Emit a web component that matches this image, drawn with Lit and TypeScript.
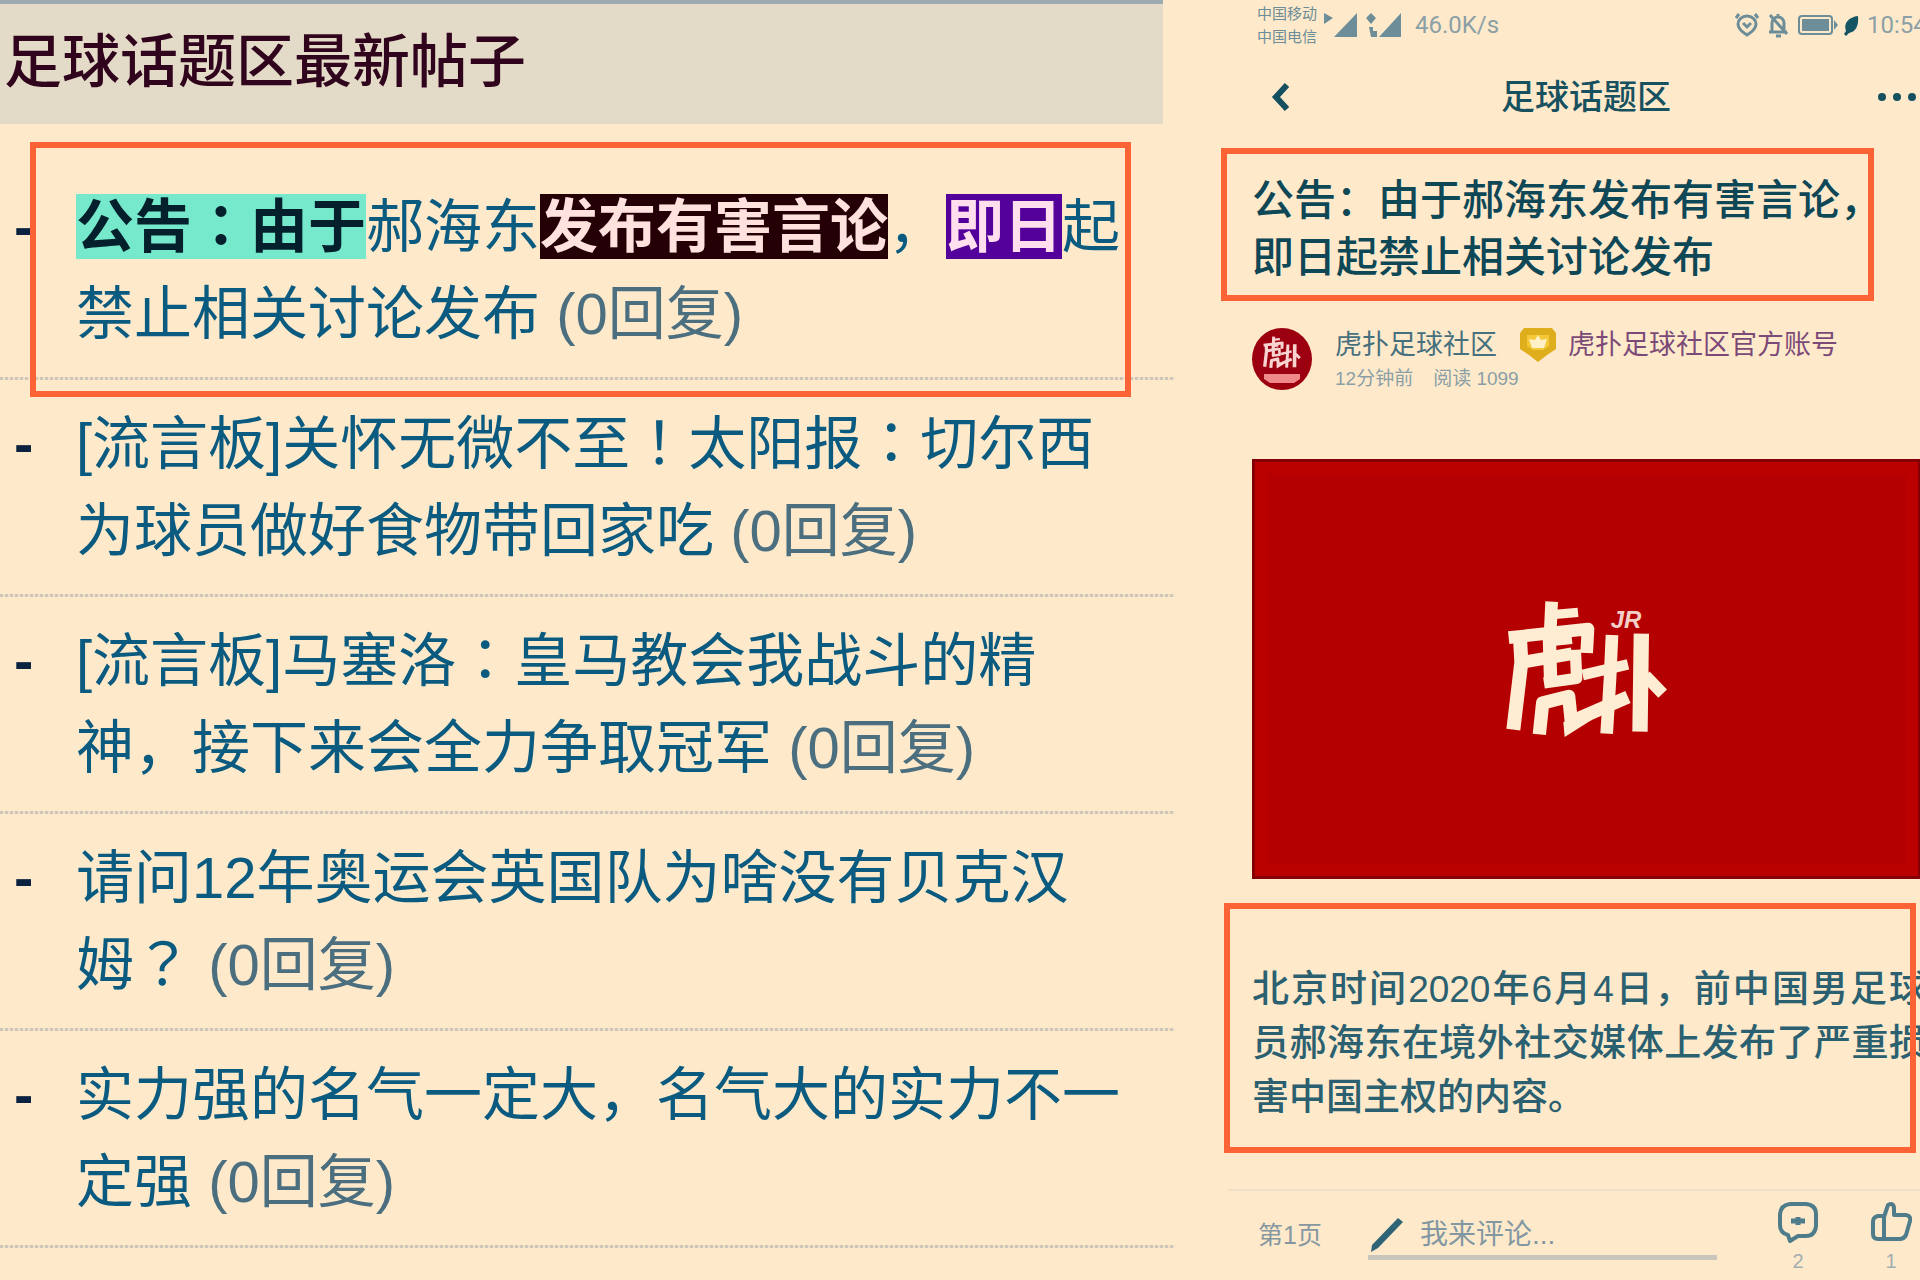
import { LitElement, html, css, svg, nothing } from "lit";
import { customElement, property } from "lit/decorators.js";

type Mark = "mint" | "dark" | "violet";
interface Run { text: string; mark?: Mark }
interface Post { runs: Run[]; replies: number; framed?: boolean }

const POSTS: Post[] = [
  {
    framed: true,
    replies: 0,
    runs: [
      { text: "公告：由于", mark: "mint" },
      { text: "郝海东" },
      { text: "发布有害言论", mark: "dark" },
      { text: "，" },
      { text: "即日", mark: "violet" },
      { text: "起禁止相关讨论发布" },
    ],
  },
  { replies: 0, runs: [{ text: "[流言板]关怀无微不至！太阳报：切尔西为球员做好食物带回家吃" }] },
  { replies: 0, runs: [{ text: "[流言板]马塞洛：皇马教会我战斗的精神，接下来会全力争取冠军" }] },
  { replies: 0, runs: [{ text: "请问12年奥运会英国队为啥没有贝克汉姆？" }] },
  { replies: 0, runs: [{ text: "实力强的名气一定大，名气大的实力不一定强" }] },
];

/* Full-width colons and marks sit in the middle of their cell in the list. */
const centred = (text: string) =>
  text.split(/([：！？])/).map((part) =>
    /^[：！？]$/.test(part) ? html`<span class="mid">${part}</span>` : part
  );

const brandMark = svg`
  <g fill="none" stroke="currentColor" stroke-linejoin="round">
    <path stroke-width="38" d="M279 68 L274 172"/>
    <path stroke-width="28" d="M290 106 L358 100"/>
    <path stroke-width="38" d="M150 176 L388 150 L384 222"/>
    <path stroke-width="42" d="M184 176 L188 250 L164 452"/>
    <path stroke-width="38" d="M200 248 L340 224"/>
    <path stroke-width="40" d="M272 170 L276 314"/>
    <path stroke-width="34" d="M256 312 L354 298 L350 212"/>
    <path stroke-width="26" d="M260 190 L340 182"/>
    <path stroke-width="40" d="M242 466 L252 372 L330 352 L338 428 L508 354"/>
    <path stroke-width="38" d="M460 168 L454 300 L444 464"/>
    <path stroke-width="32" d="M372 288 L508 256"/>
    <path stroke-width="46" d="M548 164 L544 458"/>
    <path stroke-width="36" d="M560 290 L612 344"/>
  </g>
  <path fill="currentColor" d="M314 430 L318 474 L400 422 L380 392 Z"/>`;

@customElement("post-item")
class PostItem extends LitElement {
  @property({ attribute: false }) post!: Post;

  static styles = css`
    :host {
      position: relative;
      display: flex;
      padding: 20px 47px 20px 14px;
      font-size: 58px;
      line-height: 87px;
      color: #0b5b80;
    }
    :host::after {
      content: "";
      position: absolute;
      inset: auto 0 0 0;
      height: 3px;
      background: repeating-linear-gradient(90deg, #cdc6b9 0 3px, #f3e2c8 3px 5px);
    }
    .dash { flex: 0 0 62px; color: #0a2140; font-weight: 700; }
    .text { flex: 1; min-width: 0; margin-bottom: 3px; }
    .link { color: inherit; text-decoration: none; }
    .mid { font-family: "Noto Sans CJK TC", sans-serif; line-height: 1; }
    .mark { font-weight: 700; }
    .mint { background: #76e9cd; color: #04202c; }
    .dark { background: #240006; color: #ffe2de; }
    .violet { background: #54009a; color: #ffdfee; }
    .replies { color: #4c6f80; white-space: nowrap; }
    .frame {
      position: absolute;
      inset: -21px 44px -17px 30px;
      border: 6px solid #fb6337;
      z-index: 1;
      pointer-events: none;
    }
  `;

  render() {
    const { runs, replies, framed } = this.post;
    return html`
      <span class="dash">-</span>
      <div class="text"><a class="link" href="#">${runs.map((r) =>
        r.mark ? html`<span class="mark ${r.mark}">${centred(r.text)}</span>` : centred(r.text)
      )}</a> <span class="replies">(${replies}回复)</span></div>
      ${framed ? html`<div class="frame"></div>` : nothing}
    `;
  }
}

@customElement("phone-view")
class PhoneView extends LitElement {
  static styles = css`
    :host {
      display: block;
      padding-left: 77px;
      color: #17505f;
    }
    svg { display: block; flex: none; }
    button { border: 0; padding: 0; background: none; color: inherit; font: inherit; }

    .status {
      display: flex;
      align-items: center;
      height: 50px;
      padding-left: 5px;
      color: #6d8d98;
      font-size: 24px;
      white-space: nowrap;
    }
    .carriers { font-size: 15px; line-height: 23px; }
    .signal { margin-left: 6px; }
    .speed { margin-left: 12px; font-family: Roboto, sans-serif; color: #8ba0a6; }
    .tray { display: flex; align-items: center; gap: 8px; margin-left: auto; }
    .power { display: flex; align-items: center; gap: 4px; }
    .clock { flex: none; width: 53px; font-family: Roboto, sans-serif; color: #8ba0a6; }

    .nav {
      display: grid;
      grid-template-columns: 44px 1fr 44px;
      align-items: center;
      height: 94px;
    }
    .nav .back { padding-left: 18px; }
    .nav h2 { margin: 0; text-align: center; font-size: 34px; line-height: 48px; font-weight: 500; }

    .headline { position: relative; margin-top: 28px; }
    .headline h1 {
      margin: 0;
      font-size: 42px;
      line-height: 57px;
      font-weight: 500;
      color: #0e4756;
      white-space: nowrap;
    }
    .frame {
      position: absolute;
      border: 6px solid #fb6337;
      pointer-events: none;
    }
    .headline .frame { inset: -24px 46px -15px -31px; }

    .author {
      display: grid;
      grid-template-columns: 62px 1fr;
      column-gap: 21px;
      margin-top: 41px;
    }
    .names { display: flex; align-items: center; font-size: 27px; line-height: 34px; white-space: nowrap; }
    .name { color: #47707e; }
    .names svg { margin: 0 11px 0 22px; }
    .official { color: #7c4a78; }
    .meta { display: flex; gap: 20px; margin-top: 4px; font-size: 19px; line-height: 24px; color: #8b9fa6; }

    .cover {
      display: flex;
      justify-content: center;
      align-items: center;
      margin-top: 68px;
      aspect-ratio: 668 / 420;
      box-sizing: border-box;
      border: 3px solid #840006;
      border-right-width: 2px;
      background: #b40000;
      box-shadow: inset 0 0 0 12px #bb0000;
      color: #feecd3;
    }

    .body { position: relative; margin: 84px -6px 0 0; }
    .body p {
      margin: 0;
      font-size: 37px;
      line-height: 54px;
      font-weight: 500;
      text-align: justify;
      color: #2b6070;
    }
    .body .frame { inset: -60px 10px -28px -28px; }

    .bar {
      display: flex;
      align-items: flex-start;
      margin: 64px 0 0 -24px;
      padding: 0 8px 0 30px;
      border-top: 2px solid #efdfc6;
      color: #8797a0;
    }
    .page { padding-top: 24px; font-size: 25px; line-height: 40px; }
    .compose {
      display: flex;
      align-items: center;
      flex: 1;
      gap: 16px;
      min-width: 0;
      margin: 24px 61px 0 46px;
      border-bottom: 5px solid #c8c6bd;
      color: #2f6376;
    }
    .compose input {
      flex: 1;
      min-width: 0;
      height: 40px;
      padding: 0;
      border: 0;
      outline: 0;
      background: none;
      font: inherit;
      font-size: 28px;
      color: #2f6376;
    }
    .compose input::placeholder { color: #8197a1; opacity: 1; }
    .action {
      display: grid;
      justify-items: center;
      row-gap: 8px;
      padding-top: 10px;
      font-size: 20px;
      line-height: 20px;
      color: #a3aeb0;
    }
    .action svg { color: #4f7c8a; }
    .like { margin-left: 52px; }
  `;

  render() {
    return html`
      <div class="status">
        <div class="carriers"><div>中国移动</div><div>中国电信</div></div>
        <svg class="signal" width="36" height="26" viewBox="0 0 36 26" fill="currentColor">
          <path d="M1 1l9 5-9 6zM34 1v24H11z"/>
        </svg>
        <svg class="signal" width="38" height="26" viewBox="0 0 38 26" fill="currentColor">
          <path d="M6 1l5 5-5 6-5-6zM4 15h4v4h4v6H6zM36 1v24H14z"/>
        </svg>
        <span class="speed">46.0K/s</span>
        <div class="tray">
          <svg width="24" height="26" viewBox="0 0 24 26" fill="none" stroke="currentColor" stroke-width="3">
            <path d="M4 2L1 6M20 2l3 4M12 23c-5-3-9-6-9-11a9 8 0 0 1 18 0c0 5-4 8-9 11zM8 11l4 4 4-4"/>
          </svg>
          <svg width="22" height="26" viewBox="0 0 22 26" fill="none" stroke="currentColor" stroke-width="3">
            <path d="M3 3l17 19M5 19V11a6 6 0 0 1 12 0v8M2 20h18M11 2v3M9 24h5"/>
          </svg>
          <span class="power">
            <svg width="42" height="22" viewBox="0 0 42 22">
              <rect x="2" y="2" width="33" height="18" rx="3" fill="none" stroke="currentColor" stroke-width="2"/>
              <path d="M5 5h27v12H5zM37 6l4 5-4 5z" fill="currentColor"/>
            </svg>
            <svg width="16" height="24" viewBox="0 0 16 24" fill="#155563">
              <path d="M15 3c1 9-2 16-9 17l-3 3-2-2 2-3C0 10 6 4 15 3z"/>
            </svg>
          </span>
          <span class="clock">10:54</span>
        </div>
      </div>

      <div class="nav">
        <button class="back" aria-label="返回">
          <svg width="20" height="28" viewBox="0 0 20 28" fill="none" stroke="#14505f" stroke-width="6">
            <path d="M17 2L6 14l11 12"/>
          </svg>
        </button>
        <h2>足球话题区</h2>
        <button aria-label="更多">
          <svg width="44" height="10" viewBox="0 0 44 10" fill="#14505f">
            <circle cx="6" cy="5" r="4"/><circle cx="21" cy="5" r="4"/><circle cx="36" cy="5" r="4"/>
          </svg>
        </button>
      </div>

      <div class="headline">
        <h1>公告：由于郝海东发布有害言论，<br />即日起禁止相关讨论发布</h1>
        <div class="frame"></div>
      </div>

      <div class="author">
        <svg width="62" height="64" viewBox="0 0 62 64">
          <ellipse cx="30" cy="32" rx="30" ry="31" fill="#9c0010"/>
          <svg x="10" y="9" width="40" height="33" viewBox="130 60 510 420" color="#f8d3cf">${brandMark}</svg>
          <path d="M12 47h36v5l-6 4H18l-6-4z" fill="#f08a88"/>
        </svg>
        <div>
          <div class="names">
            <span class="name">虎扑足球社区</span>
            <svg width="38" height="36" viewBox="0 0 38 36">
              <path d="M5 1h28l4 5v16l-9 6-9 7-9-7-9-6V6z" fill="#dfae1c"/>
              <path d="M8 8h22v11l-6 4H14l-6-4z" fill="#f3c93a"/>
              <path d="M19 8l3 5 6-1-3 9H13l-3-9 6 1z" fill="#fff0c8"/>
            </svg>
            <span class="official">虎扑足球社区官方账号</span>
          </div>
          <div class="meta"><span>12分钟前</span><span>阅读 1099</span></div>
        </div>
      </div>

      <div class="cover">
        <svg width="170" height="140" viewBox="130 60 510 420" role="img" aria-label="虎扑">
          ${brandMark}
          <text x="456" y="148" font-family="Liberation Sans, sans-serif" font-size="72" font-weight="700" font-style="italic" fill="#f3cfc8">JR</text>
        </svg>
      </div>

      <div class="body">
        <p>北京时间2020年6月4日，前中国男足球员郝海东在境外社交媒体上发布了严重损害中国主权的内容。</p>
        <div class="frame"></div>
      </div>

      <div class="bar">
        <span class="page">第1页</span>
        <label class="compose">
          <svg width="36" height="36" viewBox="0 0 36 36" fill="currentColor">
            <path d="M30 1l5 4L10 31l-7 4 1-7z"/>
          </svg>
          <input type="text" placeholder="我来评论..." aria-label="我来评论" />
        </label>
        <button class="action" aria-label="评论 2">
          <svg width="40" height="42" viewBox="0 0 40 42" fill="none" stroke="currentColor" stroke-width="4" stroke-linejoin="round">
            <path d="M12 3h16q10 1 10 10v12q-1 10-10 10h-8l-8 5-2-6q-8-2-8-10V13Q3 4 12 3z"/>
            <path d="M13 20h14M20 16v8" stroke-width="5"/>
          </svg>
          <span>2</span>
        </button>
        <button class="action like" aria-label="赞 1">
          <svg width="42" height="42" viewBox="0 0 42 42" fill="none" stroke="currentColor" stroke-width="4" stroke-linejoin="round">
            <path d="M14 16l4-12q6-3 6 4v6h12q5 1 4 6l-4 14q-2 4-6 4H14zM14 15H8q-5 1-5 6v12q0 5 5 5h6"/>
          </svg>
          <span>1</span>
        </button>
      </div>
    `;
  }
}

@customElement("app-root")
class AppRoot extends LitElement {
  static styles = css`
    :host {
      display: grid;
      grid-template-columns: minmax(0, 1175fr) minmax(0, 745fr);
      min-height: 100vh;
      overflow: hidden;
      background: #feeacb;
      font-family: "Liberation Sans", "Noto Sans CJK SC", sans-serif;
    }
    .title {
      margin: 0 12px 39px 0;
      padding: 0 0 4px 4px;
      border-top: 4px solid #9dabb0;
      background: #e3dac7;
      font-size: 58px;
      line-height: 116px;
      font-weight: 500;
      color: #30041c;
    }
    .list { margin: 0; padding: 0; list-style: none; }
  `;

  render() {
    return html`
      <section>
        <h1 class="title">足球话题区最新帖子</h1>
        <ul class="list">
          ${POSTS.map((post) => html`<li><post-item .post=${post}></post-item></li>`)}
        </ul>
      </section>
      <phone-view></phone-view>
    `;
  }
}
